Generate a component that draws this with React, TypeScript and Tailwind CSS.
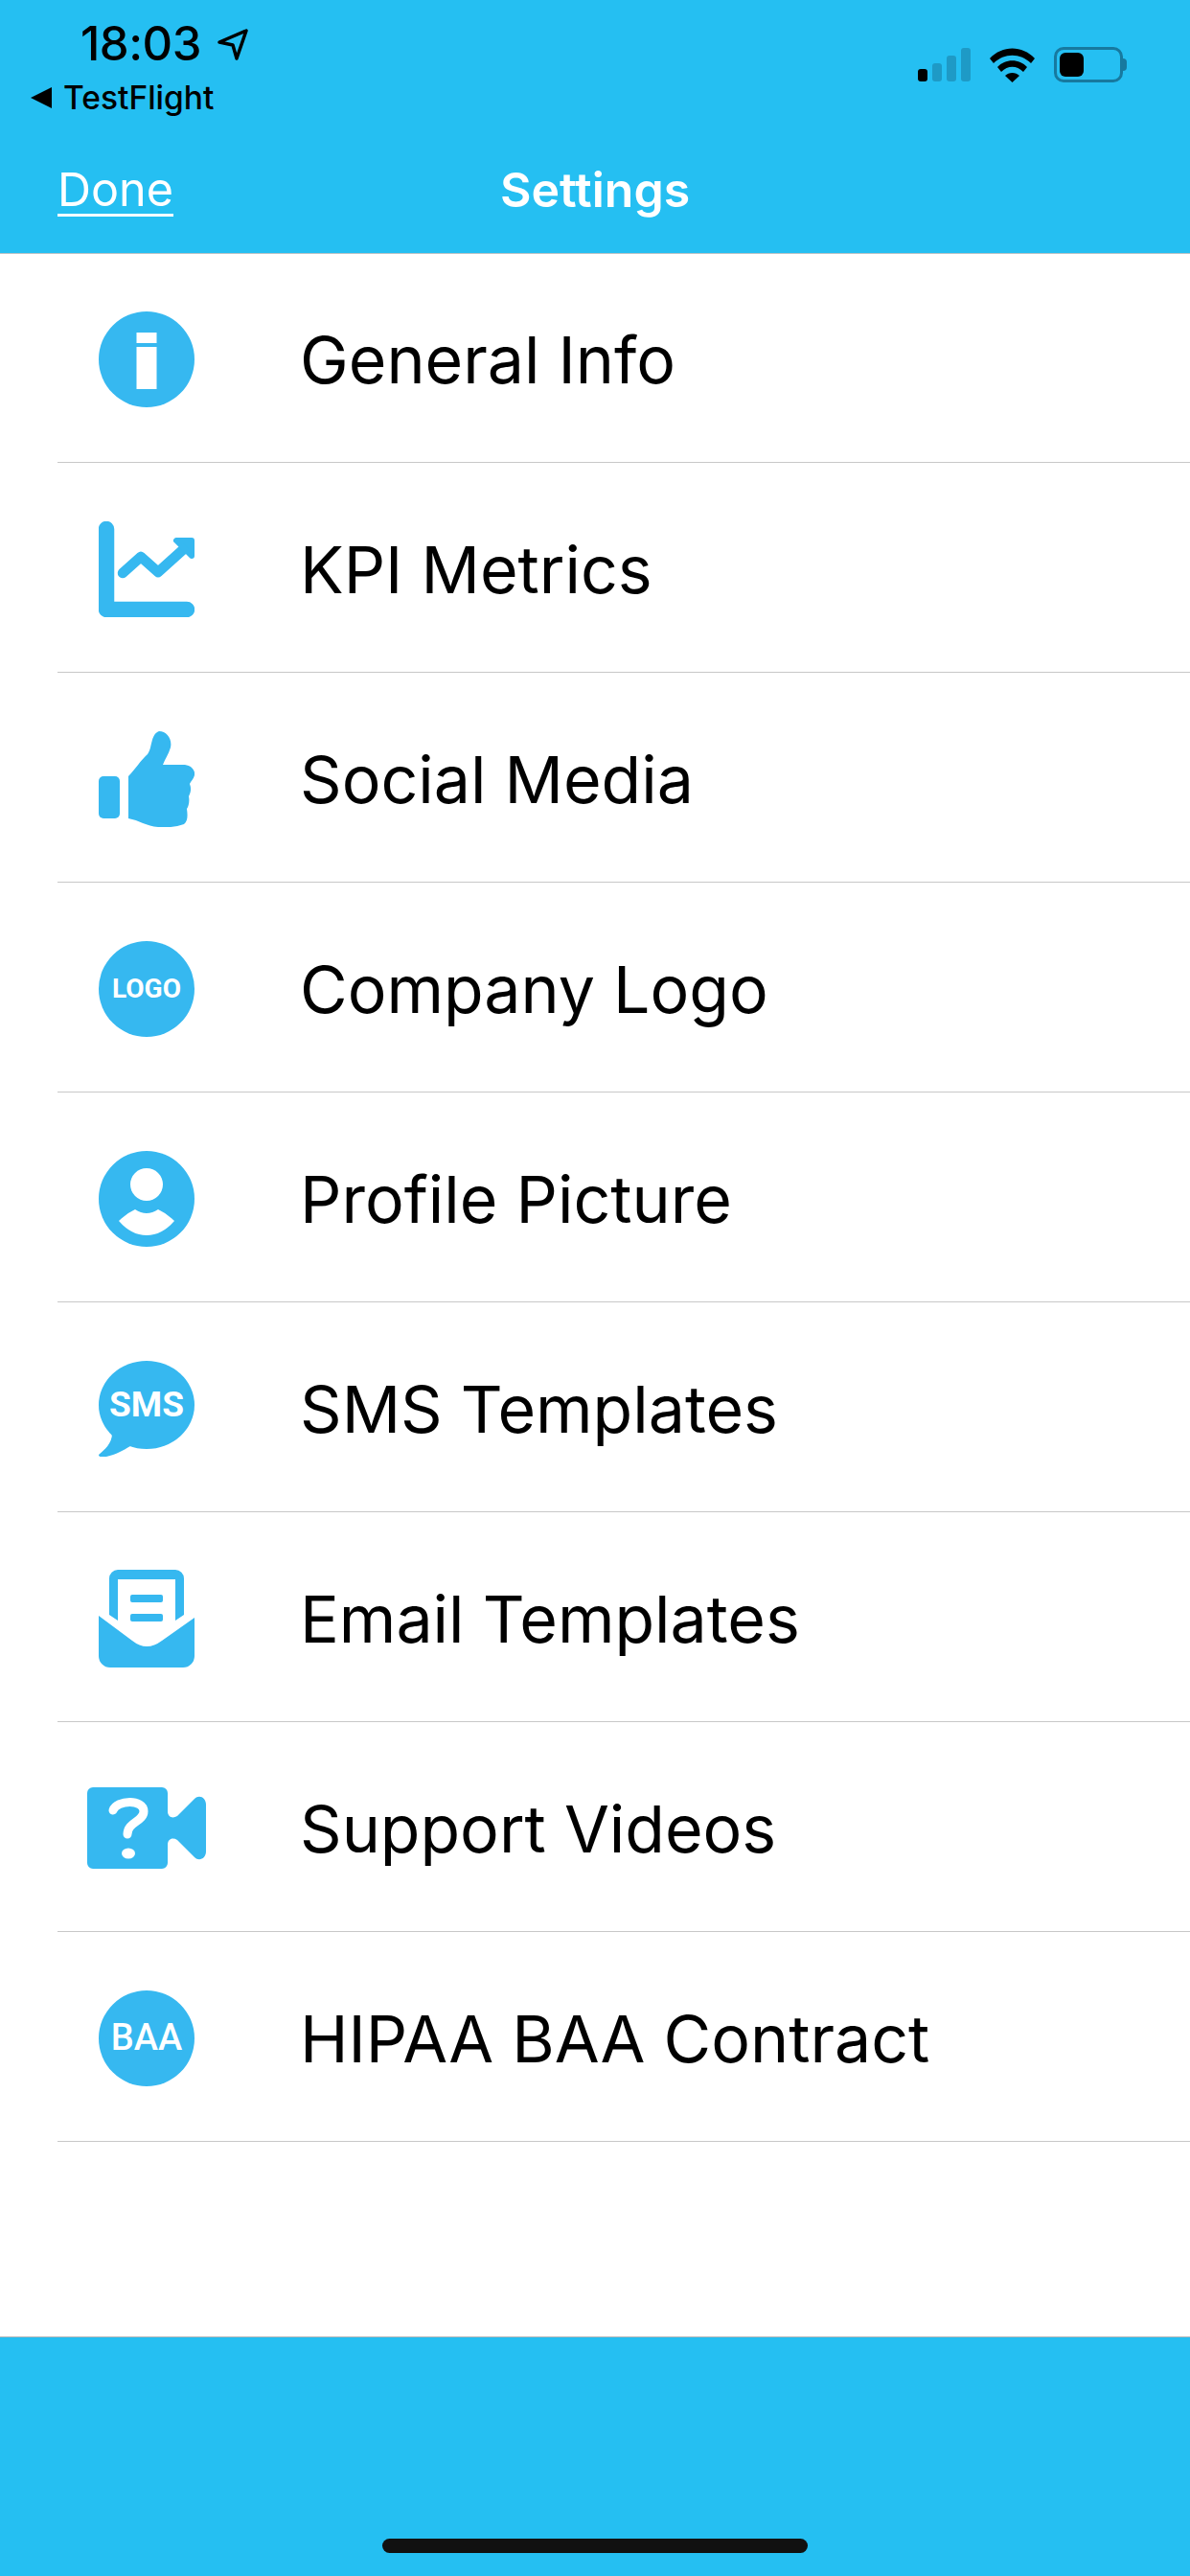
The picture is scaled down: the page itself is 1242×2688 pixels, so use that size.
const ICON = "#36b8f0";

const InfoIcon = () => (
  <svg viewBox="0 0 100 100" className="h-[100px] w-[100px]">
    <circle cx="50" cy="50" r="50" fill={ICON} />
    <rect x="39.5" y="22" width="21" height="11" fill="#fff" />
    <rect x="39.5" y="37" width="21" height="44" fill="#fff" />
  </svg>
);

const KpiIcon = () => (
  <svg viewBox="0 0 100 100" className="h-[100px] w-[100px]">
    <path d="M8 8V92H92" fill="none" stroke={ICON} strokeWidth="16.5" strokeLinecap="round" strokeLinejoin="round" />
    <path d="M25 54L44 37L62 53L92 26" fill="none" stroke={ICON} strokeWidth="10.5" strokeLinecap="round" strokeLinejoin="round" />
    <path d="M81 20H97V36Z" fill={ICON} stroke={ICON} strokeWidth="6" strokeLinejoin="round" />
  </svg>
);

const ThumbIcon = () => (
  <svg viewBox="0 0 100 100" className="h-[100px] w-[100px]">
    <rect x="0" y="47" width="22" height="44" rx="5" fill={ICON} />
    <path
      d="M31 47C38 40 44 30 51 24C56 18 54 3 63 0C71 0 77 8 75 17C73 24 69 29 67 35H90C97 36 101 41 100 46C99 50 96 52 95 55C97 60 96 64 94 68C95 73 94 78 92 81C93 88 93 94 89 97C80 100 70 101 62 100C50 99 42 93 31 91Z"
      fill={ICON}
    />
  </svg>
);

const BadgeIcon = ({ label, className }: { label: string; className: string }) => (
  <div
    className={`flex h-[100px] w-[100px] items-center justify-center rounded-full bg-[#36b8f0] font-['Roboto',sans-serif] text-white ${className}`}
  >
    {label}
  </div>
);

const ProfileIcon = () => (
  <svg viewBox="0 0 100 100" className="h-[100px] w-[100px]">
    <circle cx="50" cy="50" r="50" fill={ICON} />
    <ellipse cx="50" cy="35" rx="17" ry="17" fill="#fff" />
    <path d="M21 73Q29 65 38 61Q44 65 50 65Q56 65 62 61Q71 65 79 73Q66 88 50 88Q34 88 21 73Z" fill="#fff" />
  </svg>
);

const SmsIcon = () => (
  <svg viewBox="0 0 100 100" className="h-[100px] w-[100px]">
    <ellipse cx="50" cy="46" rx="50" ry="46" fill={ICON} />
    <path d="M14 76C14 86 6 93 0 98C0 101 4 100 8 100C18 98 26 93 33 89Z" fill={ICON} />
    <text
      x="50"
      y="58"
      textAnchor="middle"
      fill="#fff"
      fontSize="37"
      fontWeight="700"
      fontFamily="Roboto, sans-serif"
    >
      SMS
    </text>
  </svg>
);

const EmailIcon = () => (
  <svg viewBox="0 0 100 102" className="h-[102px] w-[100px]">
    <path d="M11 47V9a9 9 0 0 1 9-9H80a9 9 0 0 1 9 9V47L80 53V10H20V53Z" fill={ICON} />
    <rect x="33" y="26" width="34" height="8" rx="2" fill={ICON} />
    <rect x="33" y="46" width="34" height="8" rx="2" fill={ICON} />
    <path
      d="M0 48L35 74Q50 86 66 74L100 50V90a12 12 0 0 1-12 12H12a12 12 0 0 1-12-12Z"
      fill={ICON}
    />
  </svg>
);

const VideoIcon = () => (
  <svg viewBox="0 0 124 85" className="h-[85px] w-[124px]">
    <path
      d="M6 0H78a6 6 0 0 1 6 6V25C84 31 89 33 94 30L112 12C117 7 124 11 124 18V67C124 74 117 78 112 73L94 55C89 52 84 54 84 60V79a6 6 0 0 1-6 6H6a6 6 0 0 1-6-6V6a6 6 0 0 1 6-6Z"
      fill={ICON}
    />
    <path
      d="M27 24C31 13 59 12 59 25C59 36 42 36 42 49"
      fill="none"
      stroke="#fff"
      strokeWidth="9"
      strokeLinecap="round"
    />
    <ellipse cx="43" cy="69" rx="7" ry="5.5" fill="#fff" />
  </svg>
);

const rows = [
  { label: "General Info", icon: <InfoIcon /> },
  { label: "KPI Metrics", icon: <KpiIcon /> },
  { label: "Social Media", icon: <ThumbIcon /> },
  { label: "Company Logo", icon: <BadgeIcon label="LOGO" className="text-[28px] font-bold" /> },
  { label: "Profile Picture", icon: <ProfileIcon /> },
  { label: "SMS Templates", icon: <SmsIcon /> },
  { label: "Email Templates", icon: <EmailIcon /> },
  { label: "Support Videos", icon: <VideoIcon /> },
  { label: "HIPAA BAA Contract", icon: <BadgeIcon label="BAA" className="text-[38px] font-medium" /> },
];

const StatusRight = () => (
  <div className="flex items-center">
    <div className="flex items-end gap-[5px]">
      <span className="h-[13px] w-[10px] rounded-[3px] bg-black" />
      <span className="h-[19px] w-[10px] rounded-[3px] bg-[#1e9ac6]" />
      <span className="h-[27px] w-[10px] rounded-[3px] bg-[#1e9ac6]" />
      <span className="h-[35px] w-[10px] rounded-[3px] bg-[#1e9ac6]" />
    </div>
    <svg viewBox="0 0 47 36" className="ml-[20px] h-[36px] w-[47px]">
      <path d="M0 11C13 -3 34 -3 47 11L43 16C32 5 15 5 4 16Z" fill="#000" />
      <path d="M8 20C16 11 31 11 39 20L35 25C28 18 19 18 12 25Z" fill="#000" />
      <path d="M16 29C20 25 27 25 31 29L23.5 36Z" fill="#000" />
    </svg>
    <div className="ml-[20px] flex items-center">
      <div className="h-[37px] w-[72px] rounded-[10px] border-[3px] border-[#17799f] p-[3px]">
        <div className="h-full w-[25px] rounded-[6px] bg-black" />
      </div>
      <span className="h-[13px] w-[4px] rounded-r-full bg-[#17799f]" />
    </div>
  </div>
);

export default function App() {
  return (
    <div className="flex h-[2688px] w-[1242px] flex-col bg-white font-['Inter',sans-serif] text-black">
      <header className="relative flex h-[264px] flex-col bg-[#25bff2] shadow-[0_1px_0_#b9c3c7]">
        <div className="flex items-start justify-between pl-[32px] pr-[66px] pt-[20px]">
          <div>
            <div className="flex items-center pl-[52px]">
              <span className="text-[49px] font-medium leading-[52px] tracking-[-0.5px]">18:03</span>
              <svg viewBox="0 0 32 33" className="ml-[17px] h-[33px] w-[32px]">
                <path
                  d="M2 14L30 2L20 31L16 17Z"
                  fill="none"
                  stroke="#000"
                  strokeWidth="3.5"
                  strokeLinejoin="round"
                />
              </svg>
            </div>
            <div className="mt-[10px] flex items-center">
              <span className="h-0 w-0 border-y-[11px] border-r-[22px] border-y-transparent border-r-black" />
              <span className="ml-[12px] text-[33.5px] font-medium leading-[40px]">TestFlight</span>
            </div>
          </div>
          <div className="pt-[29px]">
            <StatusRight />
          </div>
        </div>
        <nav className="mt-[46px] grid grid-cols-3 items-center px-[60px] leading-[60px] text-white">
          <span className="text-[48.5px] underline decoration-[3px] underline-offset-[8px]">Done</span>
          <span className="text-center text-[50px] font-semibold">Settings</span>
        </nav>
      </header>

      <ul className="flex-1">
        {rows.map((row) => (
          <li key={row.label} className="ml-[60px] flex h-[219px] items-center border-b border-[#c8c8c8] pt-[3px]">
            <div className="mr-[67px] flex w-[186px] justify-center">{row.icon}</div>
            <span className="text-[68px] leading-none">{row.label}</span>
          </li>
        ))}
      </ul>

      <footer className="flex h-[250px] flex-col items-center justify-end border-t border-[#b1b5b8] bg-[#25bff2] pb-[24px]">
        <div className="h-[15px] w-[444px] rounded-full bg-[#111]" />
      </footer>
    </div>
  );
}
